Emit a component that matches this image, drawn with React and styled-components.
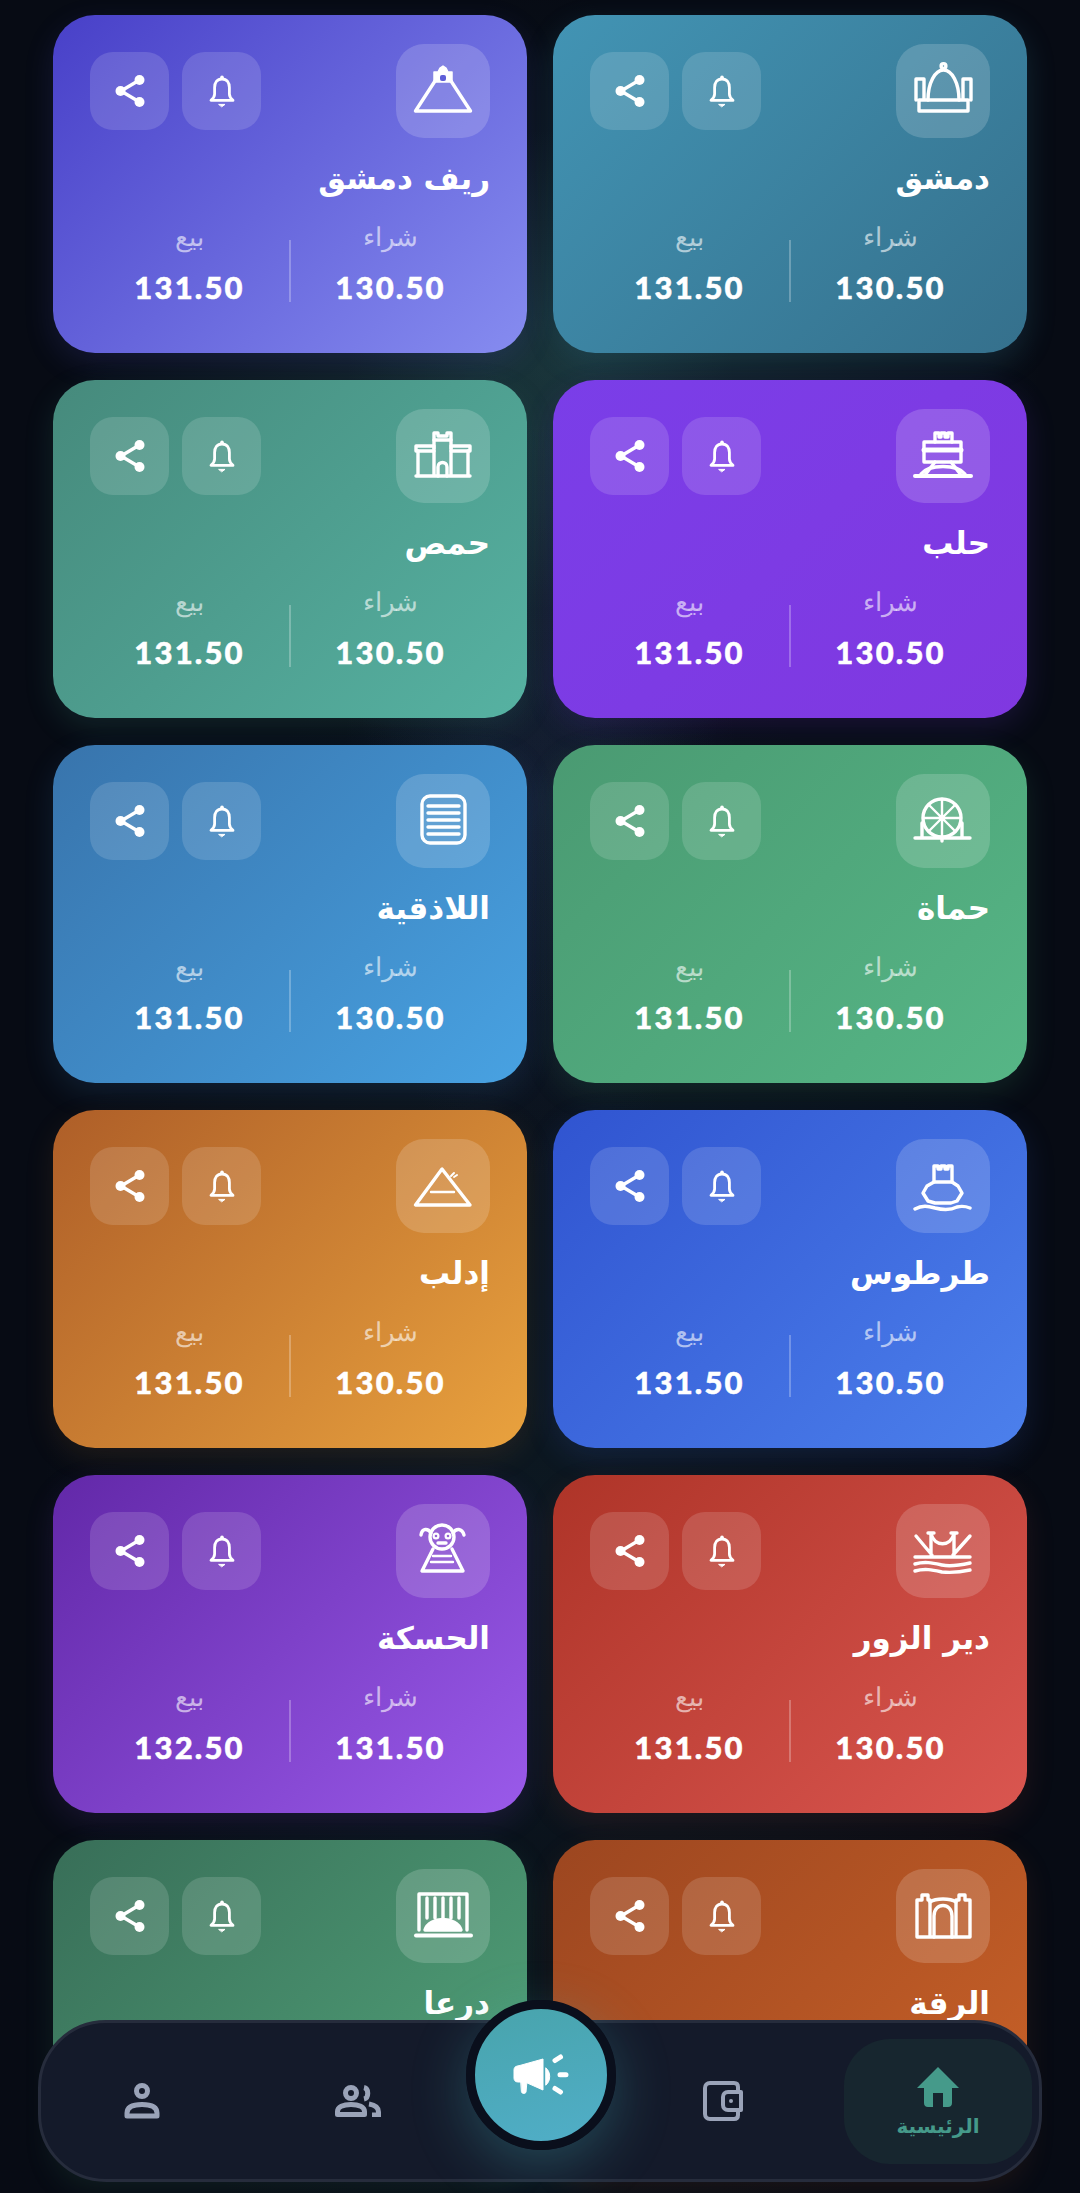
import React from 'react';
import styled, { createGlobalStyle } from 'styled-components';

const GlobalStyle = createGlobalStyle`
  html, body {
    margin: 0;
    padding: 0;
    background: #070b14;
  }
  * {
    box-sizing: border-box;
  }
`;

const Page = styled.div`
  position: relative;
  width: 1080px;
  height: 2193px;
  overflow: hidden;
  font-family: 'DejaVu Sans', 'Noto Sans', sans-serif;
  background:
    radial-gradient(ellipse 480px 240px at 52% 370px, rgba(60, 130, 130, 0.26), transparent),
    radial-gradient(ellipse 200px 520px at 50% 500px, rgba(60, 130, 130, 0.16), transparent),
    radial-gradient(ellipse 200px 380px at 50% 800px, rgba(70, 70, 170, 0.14), transparent),
    radial-gradient(ellipse 500px 900px at 50% 1500px, rgba(40, 90, 100, 0.16), transparent),
    #070b14;
`;

const Grid = styled.div`
  display: grid;
  grid-template-columns: 474px 474px;
  column-gap: 26px;
  row-gap: 27px;
  padding: 15px 53px 0;
`;

const Card = styled.div`
  height: 338px;
  padding: 29px 37px 0;
  border-radius: 42px;
  color: #fff;
  background: linear-gradient(135deg, ${(p) => p.$from}, ${(p) => p.$to});
  box-shadow: 0 10px 30px ${(p) => p.$glow};
`;

const CardHead = styled.div`
  display: flex;
  justify-content: space-between;
  align-items: flex-start;
`;

const CityIcon = styled.div`
  width: 94px;
  height: 94px;
  border-radius: 28px;
  display: flex;
  align-items: center;
  justify-content: center;
  background: rgba(255, 255, 255, 0.17);
`;

const Actions = styled.div`
  display: flex;
  gap: 13px;
  margin-top: 8px;
`;

const ActionButton = styled.div`
  width: 79px;
  height: 78px;
  border-radius: 23px;
  display: flex;
  align-items: center;
  justify-content: center;
  background: rgba(255, 255, 255, 0.14);
`;

const Title = styled.div`
  height: 56px;
  margin-top: 12px;
  font-size: 31px;
  font-weight: 700;
  line-height: 56px;
`;

const Stats = styled.div`
  display: flex;
  margin-top: 15px;
`;

const Stat = styled.div`
  flex: 1;
  display: flex;
  flex-direction: column;
  align-items: center;
  gap: 14px;
`;

const StatLabel = styled.div`
  height: 32px;
  font-size: 26px;
  line-height: 32px;
  font-weight: 300;
  color: rgba(255, 255, 255, 0.6);
`;

const StatValue = styled.div`
  height: 40px;
  font-family: 'Lato', 'Open Sans', sans-serif;
  font-size: 31px;
  line-height: 40px;
  font-weight: 900;
  letter-spacing: 2.2px;
  -webkit-text-stroke: 0.5px #fff;
`;

const Divider = styled.div`
  flex: none;
  align-self: flex-end;
  width: 2px;
  height: 62px;
  margin-bottom: 5px;
  background: rgba(255, 255, 255, 0.26);
`;

const Nav = styled.nav`
  position: fixed;
  left: 38px;
  top: 2020px;
  width: 1004px;
  height: 162px;
  padding: 0 7px;
  display: grid;
  grid-template-columns: 188px 242px 1fr 244px 188px;
  align-items: center;
  justify-items: center;
  border: 3px solid #262c3c;
  border-radius: 68px;
  background: #141a2a;
`;

const ActiveTab = styled.div`
  width: 188px;
  height: 125px;
  border-radius: 46px;
  display: flex;
  flex-direction: column;
  align-items: center;
  padding-top: 28px;
  gap: 4px;
  background: #17262f;
`;

const TabLabel = styled.div`
  font-size: 20px;
  line-height: 30px;
  font-weight: 700;
  color: #459a8a;
`;

const NavCenter = styled.div`
  position: relative;
  width: 100%;
  height: 100%;
`;

const SpeakerButton = styled.div`
  position: absolute;
  left: 50%;
  top: -23px;
  width: 150px;
  height: 150px;
  margin-left: -75px;
  border-radius: 50%;
  border: 9px solid #0a0f1c;
  display: flex;
  align-items: center;
  justify-content: center;
  background: linear-gradient(165deg, #48a4ac, #50aec8);
  box-shadow: 0 16px 56px rgba(70, 180, 190, 0.3);
`;

const Svg = ({ size = 60, h, children, ...rest }) => (
  <svg
    width={size}
    height={h || size}
    viewBox={`0 0 ${size} ${h || size}`}
    fill="none"
    stroke="#fff"
    strokeWidth="3.4"
    strokeLinecap="round"
    strokeLinejoin="round"
    {...rest}
  >
    {children}
  </svg>
);

const Bell = () => (
  <Svg size={26} h={34}>
    <path
      strokeWidth="2.8"
      d="M13 5C8 5 5.6 8.6 5.6 13.5V20C5.6 23 3.6 25 2 26.4H24C22.4 25 20.4 23 20.4 20V13.5C20.4 8.6 18 5 13 5Z"
    />
    <circle cx="13" cy="3.2" r="1.8" fill="#fff" stroke="none" />
    <path d="M10 30.4H16L13 32.6Z" fill="#fff" strokeWidth="1" />
  </Svg>
);

const Share = () => (
  <Svg size={30} h={34}>
    <path d="M24.5 6L6 17L24.5 28" />
    <circle cx="24.5" cy="6" r="5" fill="#fff" stroke="none" />
    <circle cx="5.5" cy="17" r="5" fill="#fff" stroke="none" />
    <circle cx="24.5" cy="28" r="5" fill="#fff" stroke="none" />
  </Svg>
);

const Dome = () => (
  <Svg>
    <circle cx="30.5" cy="5" r="2.4" />
    <path d="M6 39H55V50H6ZM3 39V18H11V39M50 39V18H58V39" />
    <path d="M15 39C15 22 22 9 30.5 9C39 9 46 22 46 39" />
  </Svg>
);

const Mountain = () => (
  <Svg>
    <path d="M22 20L2.5 50H57.5L38 20" />
    <path d="M21 21V11H25L27 7L30 5L33 7L35 11H39V21Z" fill="#fff" strokeWidth="1.5" />
    <rect x="27" y="14" width="6" height="6" fill="#5f5fd8" stroke="none" rx="2" />
  </Svg>
);

const Citadel = () => (
  <Svg>
    <path d="M22 16V7H26V11H28V7H32V11H35V7H39V16" />
    <path d="M11 16H48V36H11Z" />
    <path d="M11 24H48" strokeWidth="5" />
    <path d="M22 36L12 49M38 36L48 49" />
    <path d="M2 50H58" strokeWidth="4" />
    <path d="M8 48C16 38 44 38 52 48" />
  </Svg>
);

const Castle = () => (
  <Svg>
    <path d="M21 22V7H25V10H34V7H38V22" />
    <path d="M21 14H38" />
    <path d="M3 50H57M5 50V25M55 50V25M21 50V22M38 50V22" />
    <path d="M3 25V20H21M57 25V20H38M3 25H21M38 25H57" />
    <path d="M25 50V41C25 35 34 35 34 41V50" />
  </Svg>
);

const Wheel = () => (
  <Svg>
    <circle cx="29" cy="27" r="19" />
    <path d="M29 8V46M10 27H48M16 14L42 40M42 14L16 40" strokeWidth="2.4" />
    <path d="M2 47H57M9 32V47M49 32V47M29 46V50" />
  </Svg>
);

const Book = () => (
  <Svg>
    <rect x="9" y="5" width="43" height="47" rx="8" />
    <path d="M15 15H46M15 22H46M15 29H46M15 36H46M15 43H46" />
  </Svg>
);

const Boat = () => (
  <Svg>
    <path d="M21 26V10H25V13H28V10H32V13H35V10H39V26" />
    <path d="M21 26L14 30L10 37L15 45L22 47H38L44 45L49 37L45 30L39 26Z" />
    <path d="M2 53C9 49 15 50 22 52C30 54 38 54 44 51C48 50 52 50 57 52" />
  </Svg>
);

const Pyramid = () => (
  <Svg>
    <path d="M29 13L2.5 49H57L29 13Z" />
    <path d="M18 36H41" strokeWidth="2.4" />
    <path d="M38 20L41 17M41 21L44 19" strokeWidth="2" />
  </Svg>
);

const Bridge = () => (
  <Svg>
    <path d="M3 15L19 34M57 15L40 34M18 12V34M41 12V34M15 12H21M38 12H44" />
    <path d="M18 13C22 26 37 26 41 13" />
    <path d="M2 36H57" />
    <path d="M2 43C12 40 20 42 29 44C38 46 48 44 57 42M2 50C12 47 20 49 29 51C38 52 48 51 57 49" />
  </Svg>
);

const Doll = () => (
  <Svg>
    <circle cx="29" cy="16" r="12" />
    <circle cx="23" cy="15" r="2.4" strokeWidth="2.2" />
    <circle cx="35" cy="15" r="2.4" strokeWidth="2.2" />
    <path d="M25 22H33" />
    <path d="M18 12C15 7 9 7 8 14M40 12C43 7 49 7 51 14" />
    <path d="M20 28L9 50H50L39 28" />
    <path d="M20 35H38M18 41H40" strokeWidth="2.4" />
  </Svg>
);

const Gate = () => (
  <Svg>
    <path d="M3 49.5H58" strokeWidth="4" />
    <path d="M6 44V8H54V44" />
    <path d="M14 12V32M22 12V32M30 12V32M38 12V32M46 12V32" />
    <path d="M12 44C16 30 44 30 48 44Z" fill="#fff" />
  </Svg>
);

const Arch = () => (
  <Svg>
    <path d="M4 51H57M4 51V14M17 51V14M43 51V14M57 51V14M4 14H9V9H15V14H17M43 14H46V9H52V14H57" />
    <path d="M17 16C23 12 37 12 43 16" />
    <path d="M21 51V30C21 16 39 16 39 30V51" />
  </Svg>
);

const UserIcon = () => (
  <svg width="36" height="36" viewBox="0 0 36 36" fill="none" stroke="#9aa3b8" strokeWidth="5">
    <circle cx="18" cy="8" r="5.5" />
    <path d="M3 33V30C3 24 9 21.5 18 21.5S33 24 33 30V33Z" strokeLinejoin="round" />
  </svg>
);

const UsersIcon = () => (
  <svg width="46" height="32" viewBox="0 0 46 32" fill="none" stroke="#9aa3b8" strokeWidth="5">
    <circle cx="16" cy="8" r="5.5" />
    <path d="M2.5 29.5V26.5C2.5 22 8 19.5 16 19.5S29.5 22 29.5 26.5V29.5Z" strokeLinejoin="round" />
    <path d="M29 2.5C34 3.5 34 13 29 14M34 19C40 20 43.5 23 43.5 27V30H37" />
  </svg>
);

const WalletIcon = () => (
  <svg width="40" height="40" viewBox="0 0 40 40" fill="none" stroke="#9aa3b8" strokeWidth="4">
    <path d="M35 9V6C35 3.5 33.5 2 31 2H7C4 2 2 4 2 7V33C2 36 4 38 7 38H31C33.5 38 35 36.5 35 34V31" />
    <path d="M38 11H25C22 11 20 13 20 16V24C20 27 22 29 25 29H38Z" strokeLinejoin="round" />
    <circle cx="28" cy="20" r="2" fill="#9aa3b8" stroke="none" />
  </svg>
);

const HomeIcon = () => (
  <svg width="44" height="40" viewBox="0 0 44 40" fill="#459a8a">
    <path d="M22 0L43 21H36V36C36 38.5 34.5 40 32 40H27V26H17V40H12C9.5 40 8 38.5 8 36V21H1Z" />
  </svg>
);

const Megaphone = () => (
  <svg width="56" height="44" viewBox="0 0 56 44" fill="#fff" stroke="#fff" strokeLinecap="round" strokeLinejoin="round">
    <path d="M5 13L30 6V37L12 29H5C2 29 1 27 1 25V17C1 15 2 13 5 13Z" strokeWidth="1" />
    <path d="M8 28H14L13 39C12.5 41 9 41 8.5 39Z" strokeWidth="1" />
    <path d="M33 15C38 19 38 28 33 32Z" strokeWidth="1" />
    <path d="M42 7.5L47.5 4M47 21.700H53M42 35.500L47.5 39" strokeWidth="5" fill="none" />
  </svg>
);

const cities = [
  { name: 'دمشق', icon: Dome, from: '#4294b4', to: '#35708c', glow: 'rgba(60, 140, 170, 0.2)', buy: '130.50', sell: '131.50' },
  { name: 'ريف دمشق', icon: Mountain, from: '#4840c8', to: '#868cf0', glow: 'rgba(90, 90, 220, 0.16)', buy: '130.50', sell: '131.50' },
  { name: 'حلب', icon: Citadel, from: '#7a3ee8', to: '#8038e0', glow: 'rgba(120, 60, 230, 0.16)', buy: '130.50', sell: '131.50' },
  { name: 'حمص', icon: Castle, from: '#468a7c', to: '#56b2a2', glow: 'rgba(70, 160, 140, 0.16)', buy: '130.50', sell: '131.50' },
  { name: 'حماة', icon: Wheel, from: '#4a9a72', to: '#56b686', glow: 'rgba(70, 160, 120, 0.16)', buy: '130.50', sell: '131.50' },
  { name: 'اللاذقية', icon: Book, from: '#3874ac', to: '#48a2e2', glow: 'rgba(60, 130, 200, 0.16)', buy: '130.50', sell: '131.50' },
  { name: 'طرطوس', icon: Boat, from: '#3054d0', to: '#4c80ec', glow: 'rgba(60, 100, 220, 0.16)', buy: '130.50', sell: '131.50' },
  { name: 'إدلب', icon: Pyramid, from: '#ae5e28', to: '#e9a23e', glow: 'rgba(200, 120, 50, 0.12)', buy: '130.50', sell: '131.50' },
  { name: 'دير الزور', icon: Bridge, from: '#ae3428', to: '#da5650', glow: 'rgba(200, 70, 60, 0.12)', buy: '130.50', sell: '131.50' },
  { name: 'الحسكة', icon: Doll, from: '#6228a8', to: '#9a5aea', glow: 'rgba(130, 70, 210, 0.14)', buy: '131.50', sell: '132.50' },
  { name: 'الرقة', icon: Arch, from: '#9c4620', to: '#ca6228', glow: 'rgba(190, 90, 40, 0.12)', buy: '130.50', sell: '131.50' },
  { name: 'درعا', icon: Gate, from: '#386e58', to: '#52a47a', glow: 'rgba(70, 150, 110, 0.14)', buy: '130.50', sell: '131.50' },
];

const CityCard = ({ city }) => {
  const Icon = city.icon;
  return (
    <Card $from={city.from} $to={city.to} $glow={city.glow}>
      <CardHead>
        <CityIcon>
          <Icon />
        </CityIcon>
        <Actions>
          <ActionButton>
            <Bell />
          </ActionButton>
          <ActionButton>
            <Share />
          </ActionButton>
        </Actions>
      </CardHead>
      <Title>{city.name}</Title>
      <Stats>
        <Stat>
          <StatLabel>شراء</StatLabel>
          <StatValue>{city.buy}</StatValue>
        </Stat>
        <Divider />
        <Stat>
          <StatLabel>بيع</StatLabel>
          <StatValue>{city.sell}</StatValue>
        </Stat>
      </Stats>
    </Card>
  );
};

const App = () => {
  return (
    <Page dir="rtl">
      <GlobalStyle />
      <Grid>
        {cities.map((city) => (
          <CityCard key={city.name} city={city} />
        ))}
      </Grid>
      <Nav>
        <ActiveTab>
          <HomeIcon />
          <TabLabel>الرئيسية</TabLabel>
        </ActiveTab>
        <WalletIcon />
        <NavCenter>
          <SpeakerButton>
            <Megaphone />
          </SpeakerButton>
        </NavCenter>
        <UsersIcon />
        <UserIcon />
      </Nav>
    </Page>
  );
};

export default App;
